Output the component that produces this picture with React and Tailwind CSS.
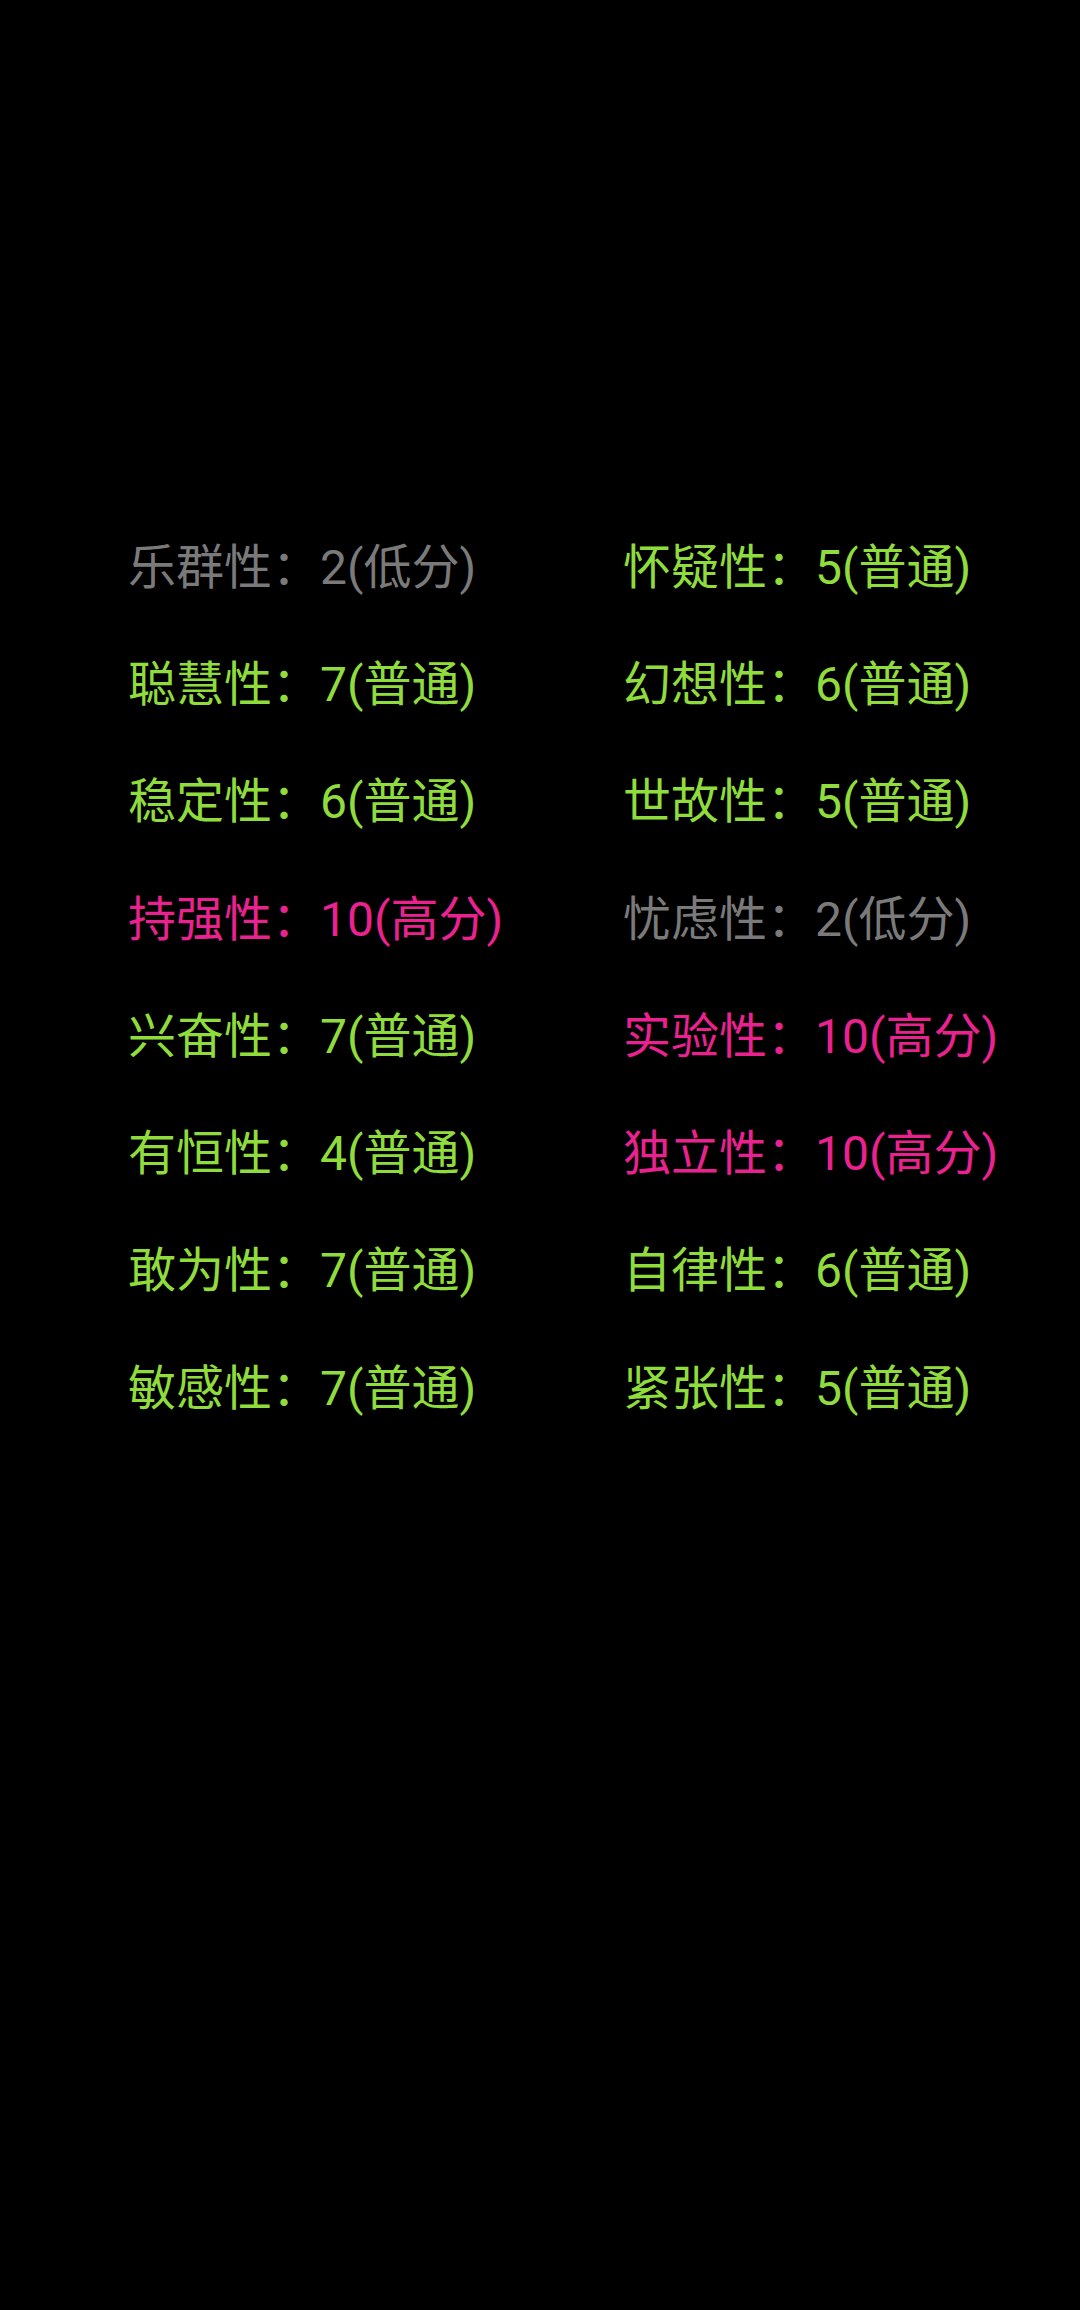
const GRAY = 'text-[#7a7a7a]';
const GREEN = 'text-[#8fdc3c]';
const PINK = 'text-[#ea2290]';

const LEVELS = {
  low: { label: '低分', color: GRAY },
  mid: { label: '普通', color: GREEN },
  high: { label: '高分', color: PINK },
};

// 16PF factors, two columns
const FACTORS = [
  ['乐群性', 2, 'low'], ['怀疑性', 5, 'mid'],
  ['聪慧性', 7, 'mid'], ['幻想性', 6, 'mid'],
  ['稳定性', 6, 'mid'], ['世故性', 5, 'mid'],
  ['持强性', 10, 'high'], ['忧虑性', 2, 'low'],
  ['兴奋性', 7, 'mid'], ['实验性', 10, 'high'],
  ['有恒性', 4, 'mid'], ['独立性', 10, 'high'],
  ['敢为性', 7, 'mid'], ['自律性', 6, 'mid'],
  ['敏感性', 7, 'mid'], ['紧张性', 5, 'mid'],
];

export default function App() {
  return (
    <div
      className="w-[1080px] h-[2310px] bg-black pt-[509px] pl-[128px]"
      style={{ fontFamily: 'Roboto, "Noto Sans CJK SC", sans-serif' }}
    >
      <div className="grid grid-cols-[495px_1fr]">
        {FACTORS.map(([name, score, level]) => {
          const lv = LEVELS[level];
          return (
            <div key={name} className={`h-[117.3px] flex items-center text-[48px] leading-none whitespace-nowrap ${lv.color}`}>
              {name}：{score}({lv.label})
            </div>
          );
        })}
      </div>
    </div>
  );
}
